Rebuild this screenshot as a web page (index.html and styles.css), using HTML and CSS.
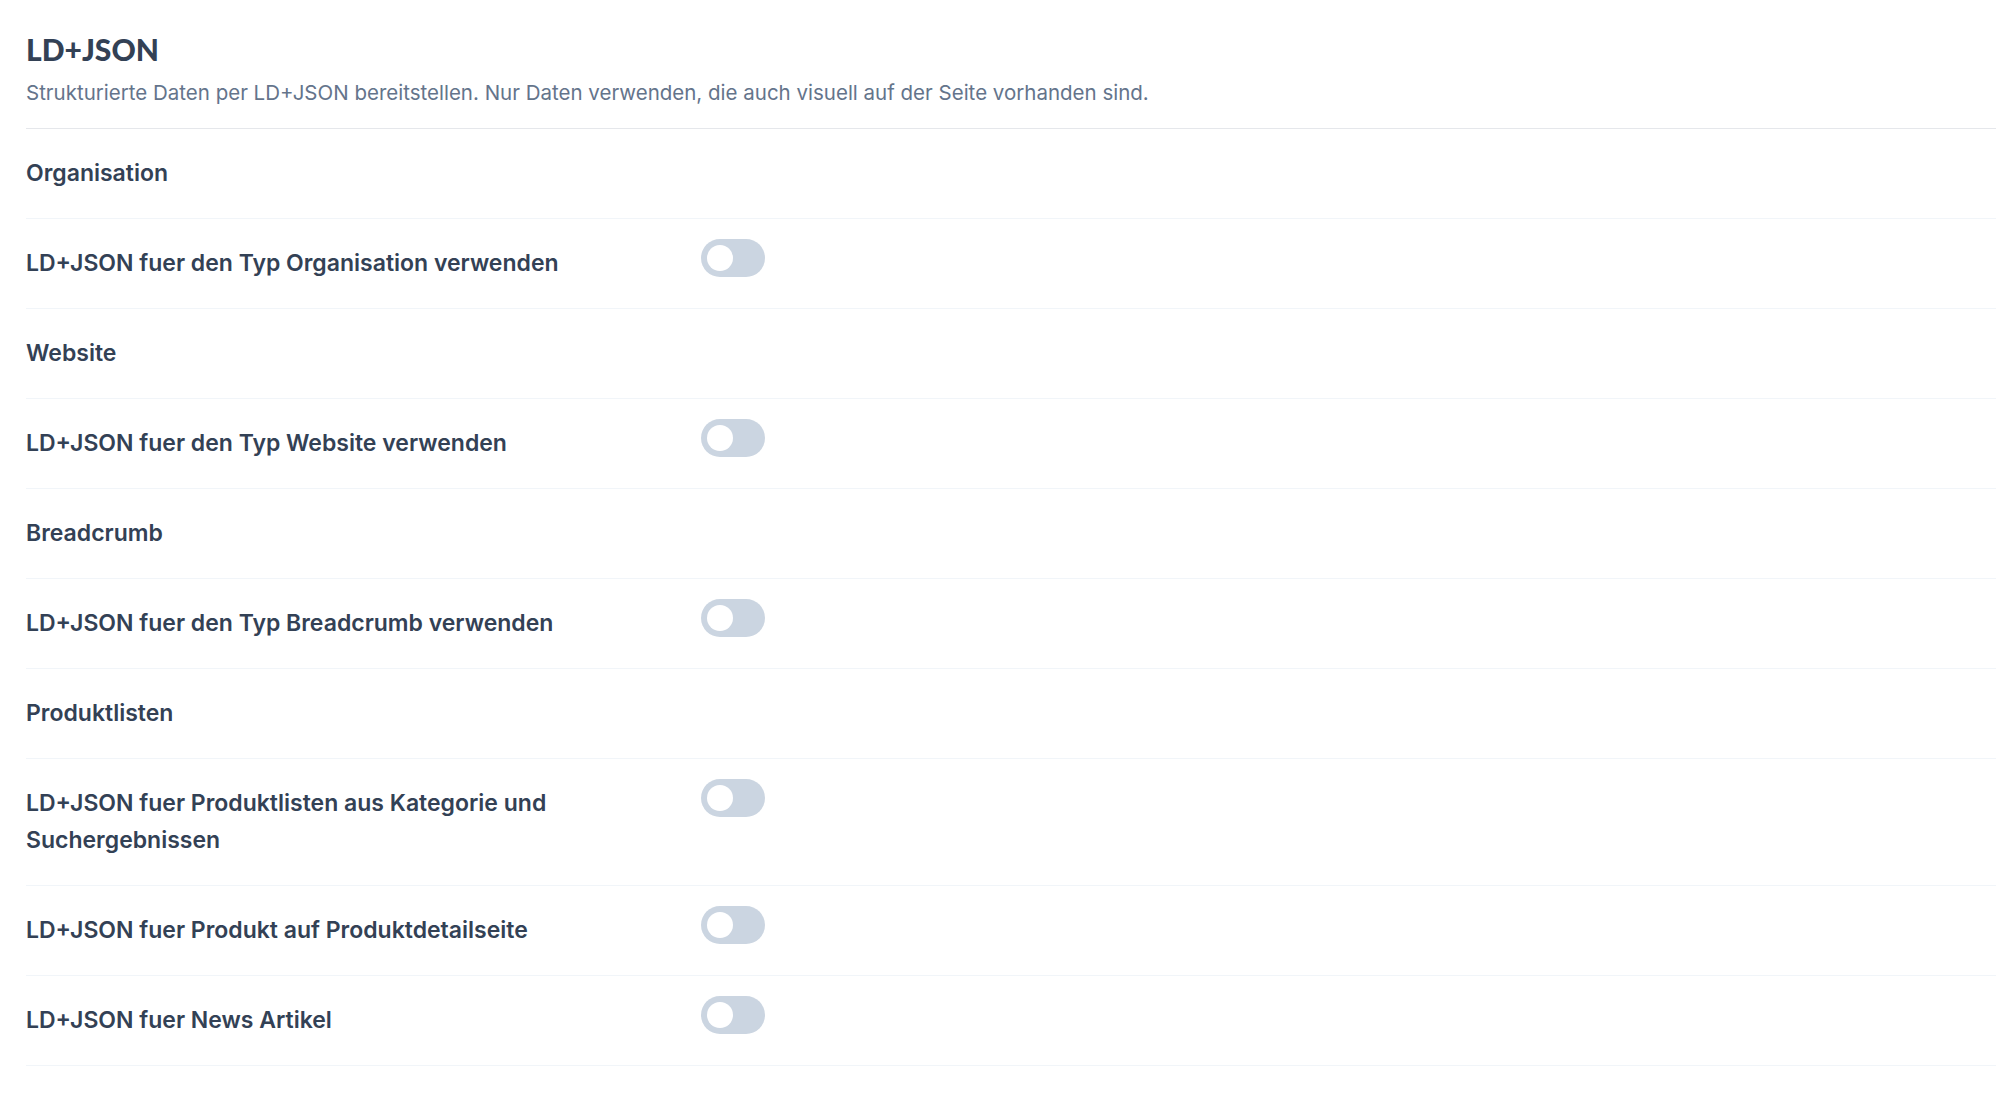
FILE: index.html
```html
<!DOCTYPE html>
<html lang="de">
<head>
<meta charset="utf-8">
<title>LD+JSON</title>
<link rel="stylesheet" href="styles.css">
</head>
<body>
<main class="panel">
  <header class="panel-head">
    <h1 class="title">LD+JSON</h1>
    <p class="subtitle">Strukturierte Daten per LD+JSON bereitstellen. Nur Daten verwenden, die auch visuell auf der Seite vorhanden sind.</p>
  </header>

  <div class="row section"><span class="label">Organisation</span></div>
  <div class="row setting">
    <span class="label">LD+JSON fuer den Typ Organisation verwenden</span>
    <span class="toggle"><span class="knob"></span></span>
  </div>

  <div class="row section"><span class="label">Website</span></div>
  <div class="row setting">
    <span class="label">LD+JSON fuer den Typ Website verwenden</span>
    <span class="toggle"><span class="knob"></span></span>
  </div>

  <div class="row section"><span class="label">Breadcrumb</span></div>
  <div class="row setting">
    <span class="label">LD+JSON fuer den Typ Breadcrumb verwenden</span>
    <span class="toggle"><span class="knob"></span></span>
  </div>

  <div class="row section"><span class="label">Produktlisten</span></div>
  <div class="row setting">
    <span class="label">LD+JSON fuer Produktlisten aus Kategorie und Suchergebnissen</span>
    <span class="toggle"><span class="knob"></span></span>
  </div>
  <div class="row setting">
    <span class="label">LD+JSON fuer Produkt auf Produktdetailseite</span>
    <span class="toggle"><span class="knob"></span></span>
  </div>
  <div class="row setting">
    <span class="label">LD+JSON fuer News Artikel</span>
    <span class="toggle"><span class="knob"></span></span>
  </div>
</main>
</body>
</html>
```
FILE: styles.css
```css
* { box-sizing: border-box; }
html, body { margin: 0; padding: 0; background: #ffffff; }
body {
  font-family: Inter, "Noto Sans", "Liberation Sans", sans-serif;
  color: #334155;
}
.panel {
  padding: 31px 16px 0 26px;
}
.panel-head {
  border-bottom: 1px solid #e5e7eb;
  padding-bottom: 20px;
}
.title {
  margin: 0;
  font-family: Lato, "Liberation Sans", sans-serif;
  font-weight: 900;
  font-size: 30px;
  line-height: 36px;
  color: #334155;
}
.subtitle {
  margin: 11px 0 0 0;
  font-size: 20.5px;
  line-height: 30px;
  color: #64748b;
}
.row {
  display: grid;
  grid-template-columns: 655px 64px;
  column-gap: 20px;
  align-items: start;
  padding: 26px 0;
  border-bottom: 1px solid #f1f5f9;
}
.label {
  font-size: 23px;
  font-weight: 600;
  line-height: 37px;
  color: #334155;
}
.toggle {
  display: flex;
  align-items: center;
  width: 64px;
  height: 38px;
  margin-top: -6px;
  padding-left: 6px;
  border-radius: 19px;
  background: #cbd5e1;
}
.knob {
  width: 26px;
  height: 26px;
  border-radius: 50%;
  background: #ffffff;
}
```
